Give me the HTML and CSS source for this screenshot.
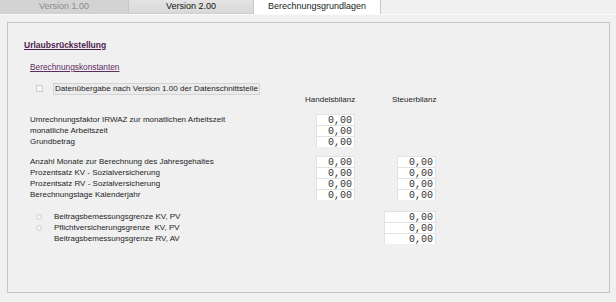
FILE: index.html
```html
<!DOCTYPE html>
<html lang="de">
<head>
    <meta charset="UTF-8">
    <title>Berechnungsgrundlagen</title>
    <link rel="stylesheet" href="styles.css">
</head>
<body>
    <div class="tabs">
        <div class="tab tab-disabled">Version 1.00</div>
        <div class="tab tab-inactive">Version 2.00</div>
        <div class="tab tab-active">Berechnungsgrundlagen</div>
    </div>

    <div class="panel">
        <h1 class="title">Urlaubsrückstellung</h1>
        <h2 class="subtitle">Berechnungskonstanten</h2>

        <div class="check-row">
            <span class="checkbox"></span>
            <span class="check-label">Datenübergabe nach Version 1.00 der Datenschnittstelle</span>
        </div>

        <div class="col-head">
            <span></span>
            <span>Handelsbilanz</span>
            <span>Steuerbilanz</span>
        </div>

        <div class="group">
            <div class="row"><span class="label">Umrechnungsfaktor IRWAZ zur monatlichen Arbeitszeit</span><span class="num">0,00</span></div>
            <div class="row"><span class="label">monatliche Arbeitszeit</span><span class="num">0,00</span></div>
            <div class="row"><span class="label">Grundbetrag</span><span class="num">0,00</span></div>
        </div>

        <div class="group">
            <div class="row"><span class="label">Anzahl Monate zur Berechnung des Jahresgehaltes</span><span class="num">0,00</span><span class="num num-sb">0,00</span></div>
            <div class="row"><span class="label">Prozentsatz KV - Sozialversicherung</span><span class="num">0,00</span><span class="num num-sb">0,00</span></div>
            <div class="row"><span class="label">Prozentsatz RV - Sozialversicherung</span><span class="num">0,00</span><span class="num num-sb">0,00</span></div>
            <div class="row"><span class="label">Berechnungstage Kalenderjahr</span><span class="num">0,00</span><span class="num num-sb">0,00</span></div>
        </div>

        <div class="group group-limits">
            <div class="row-limit"><span class="radio"></span><span class="label">Beitragsbemessungsgrenze KV, PV</span><span class="num">0,00</span></div>
            <div class="row-limit"><span class="radio"></span><span class="label">Pflichtversicherungsgrenze&nbsp; KV, PV</span><span class="num">0,00</span></div>
            <div class="row-limit"><span></span><span class="label">Beitragsbemessungsgrenze RV, AV</span><span class="num">0,00</span></div>
        </div>
    </div>
</body>
</html>
```

FILE: styles.css
```css
body {
    margin: 0;
    background-color: #f0f0f0;
    font-family: "Liberation Sans", Arial, sans-serif;
    font-size: 8px;
    color: #1e1e1e;
}

.tabs {
    display: flex;
    height: 14px;
    border-bottom: 1px solid #fafafa;
}

.tab {
    height: 13px;
    line-height: 13px;
    text-align: center;
    font-size: 9px;
    border-right: 1px solid #c8c8c8;
    border-bottom: 1px solid #cfcfcf;
}

.tab-disabled {
    width: 128px;
    background-color: #d3d3d3;
    color: #8c8c8c;
}

.tab-inactive {
    width: 124px;
    background: linear-gradient(#e4e4e4, #d8d8d8);
    color: #111;
}

.tab-active {
    width: 126px;
    height: 14px;
    background-color: #fff;
    border-bottom: none;
    color: #222;
}

.panel {
    margin: 7px 6px 6px 7px;
    height: 271px;
    border: 1px solid #c4c4c4;
    padding: 0 0 0 16px;
    box-sizing: border-box;
}

.title {
    margin: 17px 0 0;
    font-size: 8.5px;
    font-weight: bold;
    color: #4d1f50;
    text-decoration: underline;
    line-height: 11px;
}

.subtitle {
    margin: 11px 0 0 6px;
    font-size: 8.3px;
    font-weight: normal;
    color: #5e2e63;
    text-decoration: underline;
    line-height: 11px;
}

.check-row {
    display: flex;
    align-items: center;
    margin: 10px 0 0 12px;
    height: 11px;
}

.checkbox {
    width: 5px;
    height: 5px;
    border: 1px solid #cfcfcf;
    background-color: #f7f7f7;
    margin-right: 10px;
}

.check-label {
    border: 1px solid #d4d4d4;
    background-color: #ebebeb;
    padding: 0 1px;
    line-height: 10px;
    font-size: 8.1px;
}

.col-head {
    display: grid;
    grid-template-columns: 275px 87px 50px;
    margin: 0 0 0 6px;
    height: 11px;
    line-height: 11px;
}

.group {
    margin: 9px 0 0 6px;
}

.col-head + .group {
    margin-top: 9px;
}

.group-limits {
    margin-top: 11px;
}

.row {
    display: grid;
    grid-template-columns: 286px 39px 42px 39px;
    height: 11px;
}

.row .num-sb {
    grid-column: 4;
}

.row-limit {
    display: grid;
    grid-template-columns: 24px 330px 52px;
    height: 11px;
}

.label {
    line-height: 11px;
    white-space: nowrap;
}

.radio {
    width: 4px;
    height: 4px;
    margin: 3px 0 0 6px;
    border: 1px solid #d0d0d0;
    border-radius: 50%;
    background-color: #f6f6f6;
}

.num {
    height: 10px;
    line-height: 11px;
    background-color: #fff;
    border: 1px solid #e2e2e2;
    border-bottom: none;
    text-align: right;
    padding-right: 2px;
    font-family: "Liberation Mono", "Courier New", monospace;
    font-size: 10px;
    color: #333;
}
```
